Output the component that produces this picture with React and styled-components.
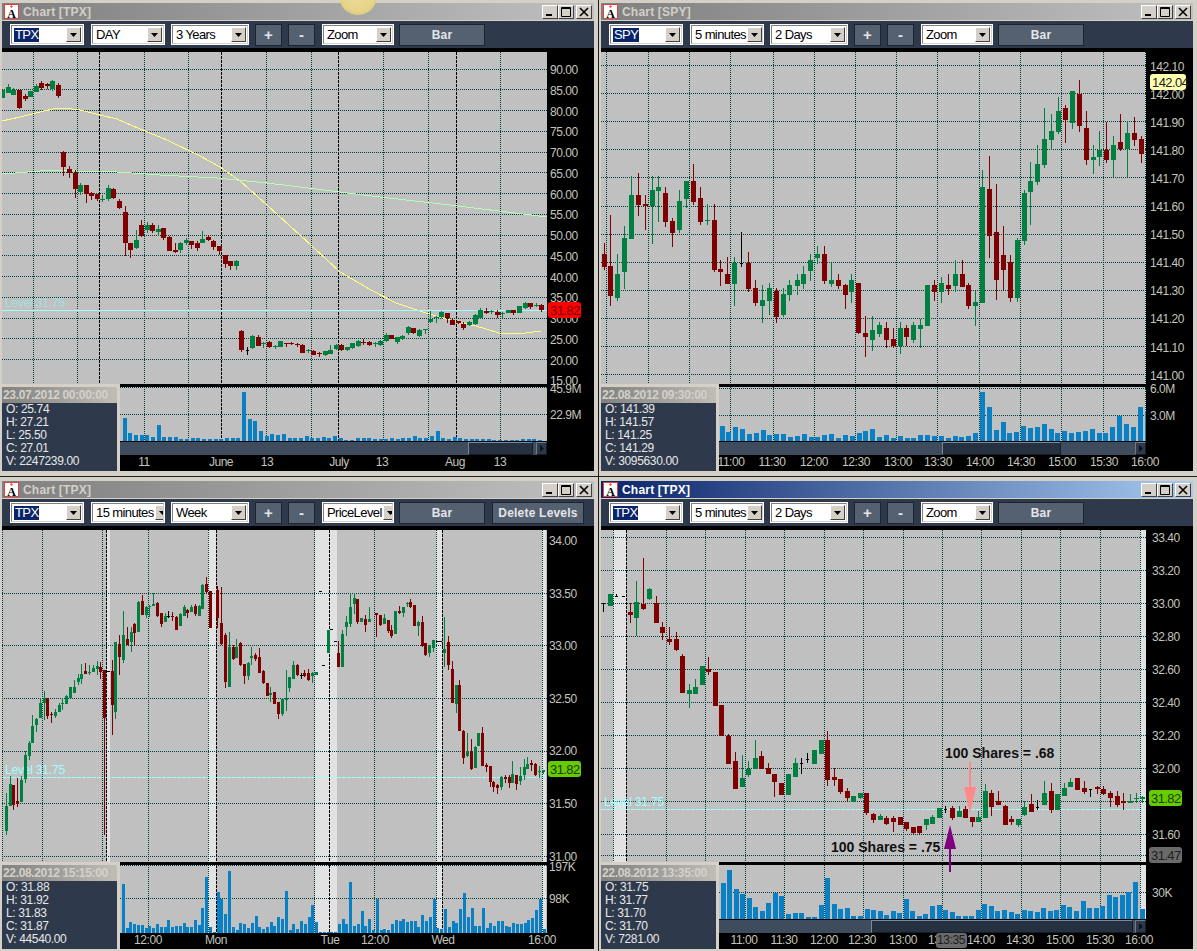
import React from "react";
import styled, { createGlobalStyle } from "styled-components";

// candle data: colour, x, wick top, body top, body bottom, wick bottom
// numbers were read off 3x crops, so every block carries its own origin
const readCandles = (text, ox, oy, fx = 3, fy = 3) =>
  text
    .trim()
    .split("\n")
    .map((line) => {
      const [c, x, wt, bt, bb, wb] = line.trim().split(" ");
      return {
        c,
        x: ox + x / fx,
        wt: oy + wt / fy,
        bt: oy + bt / fy,
        bb: oy + bb / fy,
        wb: oy + wb / fy,
      };
    });

const tpxDayA = readCandles(`g 7 120 120 143 143
g 24 102 112 128 130
g 40 115 120 135 135
r 57 120 120 174 177
r 75 132 138 148 152
g 90 122 122 140 140
g 107 102 108 126 126
r 123 93 98 114 120
r 141 100 102 108 117
g 157 90 93 117 122
r 174 100 106 138 143
r 190 304 307 351 377
r 207 348 358 370 384
r 224 360 368 417 444
g 240 400 405 426 434
r 258 405 405 432 459
r 273 425 428 438 450
r 291 432 432 447 453
g 307 435 448 450 456
g 324 406 414 447 453
r 340 414 417 444 448
r 357 447 453 474 477
r 375 468 486 579 617
r 390 579 579 600 624
g 407 540 570 594 597
r 423 510 525 558 561
g 441 516 525 540 549
r 457 519 525 543 549
g 474 525 537 546 558
r 490 534 534 565 570
r 507 558 561 603 603
r 524 579 600 606 609
g 540 576 579 600 609
g 558 564 570 579 585
r 573 573 573 585 597
r 591 573 579 594 603
g 607 543 567 579 579
r 624 555 561 570 573
r 640 570 573 591 600
r 657 588 588 603 616
r 675 616 616 642 654
r 690 633 633 648 660
g 708 630 633 648 660`, 0, 50);

const tpxDayB = readCandles(`r 15 120 123 180 186
k 32 172 180 182 195
g 49 135 138 175 178
r 65 135 141 168 168
g 82 156 159 162 174
r 98 152 156 171 174
g 116 165 168 170 177
g 132 153 153 170 170
r 149 159 159 161 171
r 165 156 158 160 165
r 182 159 161 165 171
r 199 163 165 189 189
g 216 177 181 183 189
r 232 180 183 194 195
r 249 186 189 192 201
g 266 183 183 195 197
g 282 165 180 192 192
g 299 162 165 178 180
r 315 162 165 180 183
g 332 171 171 180 183
g 349 158 160 174 177
g 365 150 153 168 171
r 382 147 156 159 165
r 399 153 155 165 168
g 416 156 159 163 171
g 432 150 153 165 168
g 449 129 135 153 156
r 465 135 135 147 147
g 482 141 141 156 162
g 499 135 138 146 150
g 516 108 111 129 135
r 532 114 114 129 132
g 549 117 120 138 141
g 566 117 117 120 132
g 582 63 87 96 100
g 599 78 80 82 99
g 615 63 66 81 84
r 632 69 69 84 99
r 649 84 90 105 105
r 666 92 94 99 102
r 682 96 102 114 120
g 699 93 96 105 108
g 716 72 75 102 105
g 732 54 60 84 87
r 749 54 63 69 72
g 766 60 63 65 72
r 783 60 66 75 84
g 799 66 69 72 84
g 815 60 60 69 69
r 832 60 60 69 75
g 849 48 48 69 69
g 866 36 39 54 57
r 882 39 39 51 57
g 899 39 45 47 51
r 915 42 45 60 66`, 236, 290);

const spyA = readCandles(`r 13 249 282 321 330
r 31 165 318 408 438
g 52 282 342 414 423
g 72 198 234 336 387
g 93 48 105 237 237
r 113 39 105 135 168
r 134 105 132 138 210
g 155 48 90 138 252
g 175 48 81 93 186
r 196 81 99 186 201
r 217 174 183 219 261
g 238 90 123 210 219
g 258 63 63 117 144
r 279 12 63 126 135
r 300 81 114 186 195
g 320 132 180 183 195
r 342 132 180 330 336
r 361 300 327 336 378
r 382 291 342 372 372
g 403 291 309 372 438
k 424 216 309 312 321
r 444 276 309 387 396
r 465 360 384 429 438
g 486 375 420 438 489
g 507 369 384 423 465
r 528 384 393 471 489
g 548 384 402 465 471
g 568 360 375 405 423
g 590 342 360 378 405
g 610 318 342 372 387
g 630 282 300 333 363
g 651 258 282 294 312
r 672 258 282 363 372
g 693 309 360 372 381
r 714 342 360 378 387
r 734 372 375 405 447
g 754 342 360 396 429
r 775 369 369 519 522
r 796 468 519 531 591
g 816 468 510 540 573
g 837 486 495 522 531
r 858 486 504 540 564
r 879 504 537 558 564
g 899 486 504 558 582
r 919 495 504 531 558
g 940 486 495 540 549
g 961 477 495 507 564
g 982 375 375 498 498
r 1002 360 375 396 423
g 1023 351 369 396 429
r 1044 342 375 387 405
g 1065 300 342 378 396
r 1085 300 342 381 381
r 1105 369 375 438 447
g 1126 393 426 438 498
g 1147 30 81 429 429
r 1167 -12 87 228 294`, 600, 160);

const spyB = readCandles(`r 48 402 546 690 750
r 70 528 615 660 720
r 90 615 636 744 756
g 111 564 570 744 756
g 131 420 430 573 585
g 151 336 393 426 525
g 172 285 342 396 405
g 193 174 267 345 354
g 214 192 243 270 300
g 235 141 183 246 252
r 255 165 174 210 279
g 275 123 123 219 237
r 297 90 132 228 246
r 318 183 234 330 345
g 338 285 321 330 372
g 358 243 300 321 348
r 379 216 300 330 339
g 400 258 285 330 381
r 421 192 276 297 303
g 441 213 249 297 381
r 462 201 249 270 288
r 483 258 267 312 339`, 980, 50);

const weekA = readCandles(`g 19 669 708 783 795
g 31 618 642 708 708
r 40 645 645 705 720
r 52 624 693 702 711
g 64 618 630 696 696
g 76 543 555 627 639
g 87 513 519 558 570
g 97 435 468 519 519
g 109 444 447 465 486
g 121 384 399 444 444
g 133 363 384 399 450
r 142 384 384 438 447
r 154 426 432 435 459
g 166 417 426 438 444
g 178 399 405 426 426
g 187 384 399 402 420
g 199 375 378 402 402
g 211 351 351 384 384
g 223 330 351 369 369
g 235 312 324 336 345
g 244 282 312 327 342
r 256 279 303 312 312
g 268 285 306 309 315
g 280 285 294 306 306
g 292 273 288 297 315
r 301 276 291 306 327
r 313 300 300 444 795
k 325 303 303 306 306
r 337 270 303 405 495
g 346 216 216 426 447
r 358 195 222 261 315
g 370 123 195 270 279
r 382 171 207 225 225
g 392 171 186 216 246
r 403 159 162 189 225
g 415 93 96 186 186
r 427 75 93 135 135
g 439 108 111 135 144
g 448 105 108 111 141
g 460 69 102 108 108
r 472 96 99 138 141
r 484 129 129 162 171
g 495 129 138 156 156
k 505 123 138 141 144
r 517 126 138 141 153
r 529 138 141 180 180
g 541 129 132 168 168
g 552 105 111 138 138
r 562 117 120 129 144
g 574 105 111 126 126
r 586 102 108 132 138
g 598 105 108 138 138
g 607 42 45 117 117
r 619 21 42 66 72
r 631 63 63 174 174
r 652 48 60 144 174
r 664 51 159 222 225
r 676 189 195 336 354
g 688 186 231 351 351
r 700 225 231 267 270
g 709 207 231 264 264
r 721 216 219 285 288
r 733 282 282 318 342
g 745 276 279 318 330
g 754 231 258 264 285
r 766 249 255 267 273
r 778 234 261 309 309
r 790 300 303 339 342
r 802 339 339 378 378
g 811 351 369 375 396
r 823 366 366 402 402
r 835 396 396 432 447`, 0, 570);

const weekB = readCandles(`g 37 385 388 432 438
g 49 300 385 390 423
g 58 321 321 354 366
g 70 273 285 327 327
r 82 282 285 315 318
k 94 309 315 318 327
r 103 300 309 318 321
r 115 297 309 330 333
g 127 306 309 318 339
g 139 306 306 315 315
k 150 64 64 66 66
k 160 286 286 288 288
g 173 180 180 249 249
k 184 177 177 179 179
k 196 213 213 215 215
r 205 213 249 291 291
g 217 180 192 291 291
g 229 138 156 171 198
g 241 69 111 162 171
g 253 69 84 102 132
r 262 87 87 156 162
g 274 144 144 156 156
r 286 135 147 165 186
g 298 111 147 156 156
r 318 129 129 135 201
r 331 135 135 165 168
g 343 132 144 162 162
r 355 150 150 183 189
r 364 165 180 198 204
g 376 123 123 192 192
r 388 108 123 129 132
g 400 111 111 129 141
g 412 96 99 102 111
r 421 87 96 111 114
r 433 105 105 168 168
g 445 153 156 168 198
r 457 138 156 228 231
r 466 219 219 255 258
g 478 225 225 249 261
g 490 210 210 234 246
k 502 213 213 215 215
k 511 213 213 215 215
g 523 141 237 249 291
r 535 198 216 285 300
r 547 273 297 399 399
g 559 345 345 402 429
r 568 330 345 483 483
r 580 480 483 564 582
g 592 489 543 558 561
r 604 507 543 597 600
g 616 528 531 594 594
g 625 489 489 528 528
r 637 471 489 588 588
r 649 579 585 592 606
r 661 588 588 636 651
r 670 633 636 651 666
r 682 642 645 654 672
g 694 618 621 651 660
r 706 615 621 627 639
r 718 615 621 639 654
g 727 573 612 639 639
r 739 615 615 642 660
g 751 591 618 633 645
g 763 567 591 615 630
g 772 561 582 597 597
r 784 570 579 585 603
r 796 579 582 615 618
g 808 588 603 606 624
g 820 600 600 606 612`, 270, 570);

const fiveA = readCandles(`k 10 159 159 161 186
g 30 132 132 168 168
k 49 132 138 140 141
k 70 138 138 140 140
r 90 159 186 195 219
g 108 93 156 204 258
r 129 24 162 177 180
g 148 114 117 147 150
r 168 138 159 219 219
r 187 216 231 249 270
r 207 231 267 276 285
r 228 246 267 300 303
r 246 312 318 429 429
g 266 402 420 432 474
g 285 387 411 432 432
g 306 348 348 405 405
r 325 321 357 366 375
r 345 366 366 468 468
r 364 465 465 558 558`, 600, 550);

const fiveB = readCandles(`r 336 43 47 132 132
r 354 97 123 207 207
g 371 105 174 201 201
g 388 123 147 165 171
g 405 60 114 147 147
r 423 93 108 147 147
r 440 129 144 162 162
r 457 162 162 186 231
r 475 190 190 225 225
g 492 162 162 225 225
g 510 114 129 171 171
k 526 114 129 131 162
k 543 99 117 119 129
g 561 90 90 132 132
g 578 60 60 102 102
r 595 33 60 180 198
r 612 144 171 180 198
r 629 177 177 216 222
r 647 204 213 234 243
g 664 228 228 246 246
g 681 219 219 234 237
r 698 219 219 279 285
r 716 279 282 300 309
g 733 282 288 300 300
r 750 288 294 312 315
r 767 288 294 306 336
r 785 291 291 315 315
r 802 306 306 327 333
r 819 321 321 339 342
r 836 318 318 339 345
g 853 297 297 315 330
g 870 285 291 312 312
g 888 264 264 294 294
k 905 258 267 269 279
r 922 258 264 294 300
g 940 258 273 291 291
r 957 258 267 294 294
r 974 291 291 306 321
g 991 273 291 306 306
g 1009 192 213 294 294
r 1025 210 219 261 288
r 1043 213 243 255 255
r 1060 255 258 315 315
r 1077 288 297 306 315
g 1095 297 297 315 321
g 1112 243 261 285 288
r 1129 222 252 276 276
k 1146 240 261 263 270
g 1163 183 219 255 255
r 1181 189 213 270 279
g 1198 222 222 270 270
g 1215 189 204 228 228
g 1232 174 186 201 201
r 1250 174 174 210 210
r 1267 183 204 216 222
k 1284 207 207 209 231
r 1302 198 201 207 222
r 1319 198 207 222 225
r 1336 213 219 234 261
r 1354 213 228 255 261
r 1371 219 243 249 270
g 1388 222 243 248 249
g 1405 219 235 237 249
g 1421 228 231 238 249`, 600, 720, 2.62, 3);

const volumes = {
  day: [144,189,195,195,195,201,165,201,201,201,207,207,204,204,207,207,208,207,204,204,204,66,147,153,183,198,192,195,192,204,204,204,198,204,204,201,204,198,204,210,210,204,204,204,207,207,207,204,207,204,204,198,204,204,198,183,204,207,201,204,207,208,208,208,208,209,210,210,210,209,208,207,208,209],
  spy: [138,156,141,147,162,159,150,165,162,162,171,168,162,171,171,165,162,174,165,168,159,153,147,171,165,174,168,174,174,165,165,168,168,174,168,171,168,159,36,81,150,126,159,156,138,144,141,132,147,159,153,159,156,153,147,159,159,141,108,132,141,81,93],
  week: [87,219,201,207,210,210,219,213,219,207,216,216,195,216,213,213,204,216,216,195,210,159,66,216,231,111,132,177,48,216,225,204,207,219,204,183,216,222,216,201,213,186,192,108,225,207,222,198,207,186,150,201,231,231,231,231,231,207,192,207,81,213,207,168,213,192,225,132,225,222,225,207,195,198,192,201,198,198,216,180,198,186,132,219,222,162,216,198,204,162,114,186,159,213,213,159,219,204,213,198,198,213,216,204,207,207,204,195,189,165,132,222],
  five: [490,450,507,522,533,561,573,549,519,528,582,579,579,590,590,555,474,553,567,563,588,588,567,569,573,584,573,580,537,573,588,582,558,555,570,576,588,588,588,570,552,558,573,570,576,582,570,573,576,564,573,570,555,561,573,543,564,564,558,525,531,525,516,486,567],
};

const yellowLine = "2,121 20,117 40,112 57,108 70,108.7 80,110 100,115 117,119 140,129 167,140 200,156 220,167 240,181 267,205 300,235 340,272 371,290 396,303 423,312 453,321 476,326 499,333 513,334 526,333 541,331";
const greenLine = "2,174 53,170 77,171 117,172 160,175 217,178 267,183 300,187 380,197 450,205 547,217";

const charts = [
  {
    id: "day",
    title: "Chart [TPX]",
    period: "DAY",
    range: "3 Years",
    mode: "Zoom",
    left: 2,
    top: 52,
    volH: 54,
    scroll: { left: 348, width: 65 },
    candles: [...tpxDayA, ...tpxDayB],
    bodyW: 5,
    teal: [33, 77, 144, 188, 266, 311, 383, 428, 500],
    black: [99, 221, 338, 456],
    rows: [...Array(15)].map((_, i) => 69 + i * 20.75),
    volRows: [387, 414],
    vol: { data: volumes.day, oy: 370, from: 124.5, to: 540, w: 4 },
    level: { y: 310, faint: true },
    info: ["23.07.2012 00:00:00", "25.74", "27.21", "25.50", "27.01", "2247239.00"],
    prices: ["90.00","85.00","80.00","75.00","70.00","65.00","60.00","55.00","50.00","45.00","40.00","35.00","30.00","25.00","20.00","15.00"],
    priceX: 550,
    priceY: (i) => 69 + i * 20.75,
    volLabels: [["45.9M", 388], ["22.9M", 414]],
    tagX: 548,
    tags: [{ label: "31.82", y: 310, bg: "#ff0000", fg: "#700000" }],
    times: [["11", 144], ["June", 221], ["13", 267], ["July", 339], ["13", 382], ["Aug", 455], ["13", 500]],
  },
  {
    id: "spy",
    title: "Chart [SPY]",
    symbol: "SPY",
    period: "5 minutes",
    range: "2 Days",
    mode: "Zoom",
    left: 601,
    top: 52,
    volH: 54,
    scroll: { left: 223, width: 119 },
    candles: [...spyA, ...spyB],
    bodyW: 5,
    bands: [[1145, 1147]],
    teal: [606, 648, 689, 730, 773, 814, 855, 896, 937, 979, 1020, 1061, 1103, 1145],
    black: [],
    rows: [...Array(12)].map((_, i) => 65.5 + i * 28.1),
    volRows: [388, 415],
    vol: { data: volumes.spy, oy: 380, from: 722, to: 1147, w: 5 },
    info: ["22.08.2012 09:30:00", "141.39", "141.57", "141.25", "141.29", "3095630.00"],
    prices: ["142.10","142.00","141.90","141.80","141.70","141.60","141.50","141.40","141.30","141.20","141.10","141.00"],
    priceX: 1150,
    priceY: (i) => 65.5 + i * 28.1,
    volLabels: [["6.0M", 388], ["3.0M", 415]],
    tagX: 1150,
    tags: [{ label: "142.04", y: 82, bg: "#ffffb0", fg: "#202020" }],
    times: [["11:00", 731], ["11:30", 772], ["12:00", 814], ["12:30", 856], ["13:00", 898], ["13:30", 938], ["14:00", 980], ["14:30", 1021], ["15:00", 1062], ["15:30", 1104], ["16:00", 1145]],
  },
  {
    id: "week",
    title: "Chart [TPX]",
    period: "15 minutes",
    range: "Week",
    mode: "PriceLevel",
    extraButton: "Delete Levels",
    lower: true,
    left: 2,
    top: 530,
    volH: 68,
    candles: [...weekA, ...weekB],
    bodyW: 3,
    bands: [[107, 110], [208, 216], [315, 337], [436, 442], [542, 546]],
    teal: [2, 42, 102, 148, 208, 314, 374, 436, 542],
    black: [106, 216, 329, 442],
    rows: [593, 645.5, 698, 751, 803, 856],
    volRows: [865, 898],
    vol: { data: volumes.week, oy: 855, from: 123.4, to: 544, w: 3 },
    level: { y: 777 },
    info: ["22.08.2012 15:15:00", "31.88", "31.92", "31.83", "31.87", "44540.00"],
    prices: ["34.00","33.50","33.00","32.50","32.00","31.50","31.00"],
    priceX: 549,
    priceY: (i) => 540 + i * 52.6,
    volLabels: [["197K", 866], ["98K", 898]],
    tagX: 548,
    tags: [{ label: "31.82", y: 769, bg: "#66cc00", fg: "#203a00" }],
    times: [["12:00", 148], ["Mon", 216], ["Tue", 330], ["12:00", 375], ["Wed", 443], ["16:00", 542]],
  },
  {
    id: "five",
    title: "Chart [TPX]",
    active: true,
    period: "5 minutes",
    range: "2 Days",
    mode: "Zoom",
    lower: true,
    left: 601,
    top: 530,
    volH: 54,
    scroll: { left: 152, width: 262 },
    candles: [...fiveA, ...fiveB],
    bodyW: 5,
    bands: [[613, 626], [1140, 1146]],
    teal: [613, 666, 705, 745, 784, 824, 863, 903, 942, 981, 1021, 1060, 1100, 1140],
    black: [626],
    rows: [537, 570, 603, 636, 669, 702, 735, 768, 801, 834, 855],
    volRows: [892],
    vol: { data: volumes.five, oy: 720, from: 723, to: 1142, w: 5 },
    level: { y: 809 },
    info: ["22.08.2012 13:35:00", "31.75", "31.77", "31.70", "31.70", "7281.00"],
    prices: ["33.40","33.20","33.00","32.80","32.60","32.40","32.20","32.00","","31.60"],
    priceX: 1152,
    priceY: (i) => 537 + i * 33,
    volLabels: [["30K", 892]],
    tagX: 1149,
    tags: [
      { label: "31.82", y: 798, bg: "#66cc00", fg: "#203a00" },
      { label: "31.47", y: 855, bg: "#6a6a6a", fg: "#202020" },
    ],
    times: [["11:00", 744], ["11:30", 784], ["12:00", 824], ["12:30", 862], ["13:00", 903], ["13:30", 942], ["14:00", 981], ["14:30", 1020], ["15:00", 1060], ["15:30", 1100], ["16:00", 1139]],
    crosshairTime: { label: "13:35", x: 951 },
    notes: true,
  },
];

const PLOT_W = 545;
const PLOT_H = 332;
const INFO_W = 118;
const CANDLE_COLORS = { r: "#7f0000", g: "#008040", k: "#000000" };

const GlobalStyle = createGlobalStyle`
  html, body { margin: 0; padding: 0; background: #1a1a1a; }
  body { font-family: "Liberation Sans", Arial, sans-serif; }
`;

const Desktop = styled.div`
  position: relative;
  width: 1197px;
  height: 951px;
  overflow: hidden;
  background: #1c1c1c;
  display: grid;
  grid-template-columns: 598px 598px;
  grid-template-rows: 476px 474px;
  gap: 1px;
`;

const Glow = styled.div`
  position: absolute;
  left: 339px;
  top: -23px;
  width: 38px;
  height: 38px;
  border-radius: 50%;
  background: radial-gradient(circle at 50% 45%, #f0dc98 0%, #e6d488 60%, #cdbb6c 100%);
`;

const Frame = styled.section`
  background: #d4d0c8;
  padding: ${(p) => (p.$lower ? "4px" : "3px")} 4px 0 2px;
  display: flex;
  flex-direction: column;
`;

const TitleBar = styled.header`
  height: 17px;
  display: flex;
  align-items: center;
  padding: 0 2px 0 2px;
  margin-bottom: 1px;
  background: ${(p) =>
    p.$active
      ? "linear-gradient(90deg, #0a246a 0%, #a6caf0 100%)"
      : "linear-gradient(90deg, #808080 0%, #c0c0c0 100%)"};
`;

const TitleText = styled.span`
  margin-left: 4px;
  flex: 1;
  font-size: 12px;
  font-weight: 700;
  letter-spacing: 0.2px;
  color: ${(p) => (p.$active ? "#ffffff" : "#d4d0c8")};
`;

const CaptionButton = styled.button`
  width: 16px;
  height: 14px;
  margin-left: ${(p) => (p.$gap ? "2px" : "0")};
  padding: 0;
  border: 1px solid;
  border-color: #ffffff #404040 #404040 #ffffff;
  background: #d4d0c8;
  display: flex;
  align-items: center;
  justify-content: center;
`;

const Toolbar = styled.div`
  height: 27px;
  background: #2e3a4c;
  display: flex;
  align-items: center;
  padding: 0 0 0 8px;
`;

const SelectBox = styled.div`
  box-sizing: border-box;
  width: ${(p) => p.$w}px;
  height: 21px;
  margin-right: ${(p) => p.$mr ?? 7}px;
  padding: 0 1px 0 2px;
  display: flex;
  align-items: center;
  justify-content: space-between;
  background: #ffffff;
  border: 2px solid;
  border-color: #808080 #d4d0c8 #d4d0c8 #808080;
  outline: 1px solid #ffffff;
  outline-offset: -1px;
  font-size: 13px;
  letter-spacing: -0.6px;
  color: #000000;
  overflow: hidden;
  white-space: nowrap;
`;

const Picked = styled.span`
  background: ${(p) => (p.$on ? "#0a246a" : "transparent")};
  color: ${(p) => (p.$on ? "#ffffff" : "#000000")};
  padding: 0 1px;
  line-height: 14px;
`;

const SelectArrow = styled.div`
  flex: none;
  width: 15px;
  height: 15px;
  box-sizing: border-box;
  border: 1px solid;
  border-color: #ffffff #404040 #404040 #ffffff;
  background: #d4d0c8;
  display: flex;
  align-items: center;
  justify-content: center;
`;

const ToolButton = styled.button`
  box-sizing: border-box;
  width: ${(p) => p.$w}px;
  height: 22px;
  margin-right: ${(p) => p.$mr ?? 7}px;
  padding: 0;
  background: #556070;
  border: 1px solid #1c2430;
  color: #e4e6ea;
  font-family: "Liberation Sans", Arial, sans-serif;
  font-size: ${(p) => (p.$plain ? "15px" : "12px")};
  font-weight: 700;
  letter-spacing: 0.2px;
`;

const Chart = styled.div`
  position: relative;
  height: 423px;
  box-sizing: border-box;
  padding-top: 4px;
  background: #000000;
  display: grid;
  grid-template-columns: ${PLOT_W}px 47px;
`;

const LeftColumn = styled.div`
  display: flex;
  flex-direction: column;
`;

const Pane = styled.svg`
  display: block;
  flex: none;
  overflow: hidden;
`;

const AxisPane = styled.svg`
  display: block;
  overflow: visible;
`;

const LowerRow = styled.div`
  display: flex;
  height: 87px;
`;

const InfoBox = styled.aside`
  position: relative;
  z-index: 2;
  box-sizing: border-box;
  flex: none;
  width: ${INFO_W}px;
  height: 87px;
  border-top: 3px solid #d4d0c8;
  border-right: 3px solid #d4d0c8;
  background: #2e3a4c;
  color: #e8e8e8;
  font-size: 12px;
  letter-spacing: -0.35px;
`;

const InfoStamp = styled.div`
  height: 16px;
  line-height: 16px;
  padding-left: 1px;
  background: linear-gradient(90deg, #808080 0%, #c0bdb6 100%);
  color: #d4d0c8;
  font-weight: 700;
  white-space: nowrap;
  overflow: hidden;
`;

const InfoRow = styled.div`
  height: 13px;
  line-height: 13px;
  padding-left: 4px;
  &:first-of-type { margin-top: 2px; }
`;

const RightColumn = styled.div`
  flex: 1;
  min-width: 0;
  display: flex;
  flex-direction: column;
`;

const Divider = styled.div`
  flex: none;
  height: 3px;
  background: #000000;
`;

const VolumeBase = styled.div`
  flex: none;
  height: 1px;
  background: #000000;
`;

const ScrollTrack = styled.div`
  flex: none;
  height: 13px;
  background: #3f4c5e;
  display: flex;
  align-items: stretch;
`;

const ScrollThumb = styled.div`
  box-sizing: border-box;
  margin-left: ${(p) => p.$left}px;
  width: ${(p) => p.$width}px;
  background: #253040;
  border: 1px solid;
  border-color: #7c8794 #141c26 #141c26 #7c8794;
`;

const ScrollEnd = styled.div`
  box-sizing: border-box;
  margin-left: auto;
  width: 11px;
  background: #2e3a4c;
  border: 1px solid;
  border-color: #6f7a88 #141c26 #141c26 #6f7a88;
  display: flex;
  align-items: center;
  justify-content: center;
`;

const TimeAxis = styled.svg`
  display: block;
  flex: none;
  overflow: visible;
`;

const GridLine = styled.line`
  stroke: ${(p) => (p.$black ? "#000000" : "#003c3c")};
  stroke-width: 1;
  stroke-dasharray: ${(p) => (p.$black ? "3 1" : "1 1")};
  shape-rendering: crispEdges;
`;

const LevelLine = styled.line`
  stroke: #a0ffff;
  stroke-dasharray: ${(p) => (p.$faint ? "none" : "4 1")};
  shape-rendering: crispEdges;
`;

const LevelText = styled.text`
  font-size: 12px;
  letter-spacing: -0.2px;
  fill: ${(p) => (p.$faint ? "#a0e0e0" : "#a0ffff")};
`;

const MovingAverage = styled.polyline`
  fill: none;
  stroke: ${(p) => p.$color};
  stroke-width: 1;
  shape-rendering: crispEdges;
`;

const AxisLabel = styled.text`
  font-size: 12px;
  letter-spacing: -0.45px;
  fill: #c4c4bc;
`;

const TagLabel = styled.text`
  font-size: 13px;
  letter-spacing: -0.6px;
`;

const NoteText = styled.text`
  font-size: 14px;
  font-weight: 700;
  fill: #101010;
`;

const Notes = styled.svg`
  position: absolute;
  left: 0;
  top: 0;
  pointer-events: none;
`;

// the little "A" program icon on the left of every caption
const AppIcon = () => (
  <svg width="15" height="15" viewBox="0 0 15 15">
    <rect x="0.5" y="0.5" width="14" height="14" fill="#fff" stroke="#e04040" />
    <path d="M7.5 1 L9 2.5 L7.5 4 L6 2.5 Z" fill="#e05050" />
    <text x="7.5" y="13.5" textAnchor="middle" fontSize="12" fontWeight="700" fontFamily="Liberation Serif">
      A
    </text>
  </svg>
);

const MinimizeIcon = () => (
  <svg width="10" height="10" viewBox="0 0 10 10">
    <rect x="1" y="7" width="6" height="2" fill="#000" />
  </svg>
);

const MaximizeIcon = () => (
  <svg width="10" height="10" viewBox="0 0 10 10">
    <path d="M0.5 0.5h9v9h-9z M0.5 1.5h9" fill="none" stroke="#000" />
  </svg>
);

const CloseIcon = () => (
  <svg width="10" height="10" viewBox="0 0 10 10">
    <path d="M1 1 L9 9 M9 1 L1 9" stroke="#000" strokeWidth="1.6" />
  </svg>
);

const DownArrow = () => (
  <svg width="7" height="4" viewBox="0 0 7 4">
    <path d="M0 0h7L3.5 4z" fill="#000" />
  </svg>
);

const RightArrow = () => (
  <svg width="4" height="7" viewBox="0 0 4 7">
    <path d="M0 0v7l4-3.5z" fill="#0c121a" />
  </svg>
);

const Select = ({ w, value, picked, mr }) => (
  <SelectBox $w={w} $mr={mr}>
    <Picked $on={picked}>{value}</Picked>
    <SelectArrow>
      <DownArrow />
    </SelectArrow>
  </SelectBox>
);

const Candle = ({ candle, bodyW }) => {
  const { c, x, wt, bt, bb, wb } = candle;
  const fill = CANDLE_COLORS[c];
  const cx = Math.round(x);
  const bw = c === "k" ? 3 : bodyW;
  return (
    <g fill={fill} shapeRendering="crispEdges">
      <rect x={cx} y={wt} width="1" height={Math.max(wb - wt, 1)} />
      <rect x={cx - Math.floor(bw / 2)} y={bt} width={bw} height={Math.max(bb - bt, 1)} />
    </g>
  );
};

const VerticalGuides = ({ chart, y1, y2 }) => (
  <>
    {(chart.bands || []).map(([a, b]) => (
      <rect key={a} x={a} y={y1} width={b - a} height={y2 - y1} fill="#e2e2e2" />
    ))}
    {chart.teal.map((x) => (
      <GridLine key={x} x1={x} x2={x} y1={y1} y2={y2} />
    ))}
    {chart.black.map((x) => (
      <GridLine key={x} $black x1={x} x2={x} y1={y1} y2={y2} />
    ))}
  </>
);

const PricePane = ({ chart }) => {
  const { left, top, level } = chart;
  return (
    <Pane width={PLOT_W} height={PLOT_H} viewBox={`${left} ${top} ${PLOT_W} ${PLOT_H}`}>
      <rect x={left} y={top} width={PLOT_W} height={PLOT_H} fill="#c0c0c0" />
      <VerticalGuides chart={chart} y1={top} y2={top + PLOT_H} />
      {chart.rows.map((y) => (
        <GridLine key={y} x1={left} x2={left + PLOT_W} y1={y} y2={y} />
      ))}
      {chart.id === "day" && (
        <>
          <MovingAverage points={yellowLine} $color="#ffff80" />
          <MovingAverage points={greenLine} $color="#b4ffb4" />
        </>
      )}
      {level && (
        <>
          <LevelLine $faint={level.faint} x1={left} x2={left + PLOT_W} y1={level.y} y2={level.y} />
          <LevelText $faint={level.faint} x={left + 3} y={level.y - 3}>
            Level 31.75
          </LevelText>
        </>
      )}
      {chart.candles.map((candle, i) => (
        <Candle key={i} candle={candle} bodyW={chart.bodyW} />
      ))}
    </Pane>
  );
};

const VolumePane = ({ chart }) => {
  const { left, top, volH, vol } = chart;
  const x0 = left + INFO_W;
  const y0 = top + PLOT_H + 3;
  const w = PLOT_W - INFO_W;
  const step = (vol.to - vol.from) / (vol.data.length - 1);
  const base = y0 + volH;
  return (
    <Pane width={w} height={volH} viewBox={`${x0} ${y0} ${w} ${volH}`}>
      <rect x={x0} y={y0} width={w} height={volH} fill="#c0c0c0" />
      <VerticalGuides chart={chart} y1={y0} y2={base} />
      {chart.volRows.map((y) => (
        <GridLine key={y} x1={x0} x2={x0 + w} y1={y} y2={y} />
      ))}
      {vol.data.map((t, i) => {
        const y = vol.oy + t / 3;
        return (
          <rect
            key={i}
            x={Math.round(vol.from + i * step - vol.w / 2)}
            y={y}
            width={vol.w}
            height={base - y}
            fill="#0a80c4"
            shapeRendering="crispEdges"
          />
        );
      })}
    </Pane>
  );
};

const PriceTag = ({ tag, x }) => (
  <g>
    <rect x={x} y={tag.y - 8} width={tag.label.length > 5 ? 36 : 33} height={16} rx="3" fill={tag.bg} />
    <TagLabel x={x + 2} y={tag.y + 5} fill={tag.fg}>
      {tag.label}
    </TagLabel>
  </g>
);

const PriceAxis = ({ chart }) => {
  const x0 = chart.left + PLOT_W;
  const h = 423 - 4;
  return (
    <AxisPane width="47" height={h} viewBox={`${x0} ${chart.top} 47 ${h}`}>
      {chart.prices.map((p, i) =>
        p ? (
          <AxisLabel key={i} x={chart.priceX} y={chart.priceY(i) + 5}>
            {p}
          </AxisLabel>
        ) : null
      )}
      {chart.volLabels.map(([text, y]) => (
        <AxisLabel key={text} x={chart.priceX} y={y + 5}>
          {text}
        </AxisLabel>
      ))}
      {chart.tags.map((tag) => (
        <PriceTag key={tag.label} tag={tag} x={chart.tagX} />
      ))}
    </AxisPane>
  );
};

const TimeLabels = ({ chart }) => {
  const x0 = chart.left + INFO_W;
  const w = PLOT_W - INFO_W;
  return (
    <TimeAxis width={w} height="16" viewBox={`${x0} 0 ${w} 16`}>
      {chart.times.map(([text, x], i) => (
        <AxisLabel key={i} x={x} y="11" textAnchor="middle">
          {text}
        </AxisLabel>
      ))}
      {chart.crosshairTime && (
        <g>
          <rect x={chart.crosshairTime.x - 15} y="0" width="31" height="15" rx="3" fill="#6a6a6a" />
          <AxisLabel x={chart.crosshairTime.x} y="11" textAnchor="middle" style={{ fill: "#1c1c1c" }}>
            {chart.crosshairTime.label}
          </AxisLabel>
        </g>
      )}
    </TimeAxis>
  );
};

// the two hand drawn trade marks on the active chart, they cross the pane edge
const TradeNotes = ({ chart }) => {
  const w = 592;
  const h = 419;
  return (
    <Notes width={w} height={h + 4} viewBox={`${chart.left} ${chart.top - 4} ${w} ${h + 4}`}>
      <NoteText x="945" y="758">100 Shares = .68</NoteText>
      <NoteText x="831" y="852">100 Shares = .75</NoteText>
      <path d="M969 762h2v25h5l-6 26-6-26h5z" fill="#ff8888" />
      <path d="M949 872h2v-23h5l-6-24-6 24h5z" fill="#800080" />
    </Notes>
  );
};

const ChartWindow = ({ chart }) => (
  <Frame $lower={chart.lower}>
    <TitleBar $active={chart.active}>
      <AppIcon />
      <TitleText $active={chart.active}>{chart.title}</TitleText>
      <CaptionButton><MinimizeIcon /></CaptionButton>
      <CaptionButton><MaximizeIcon /></CaptionButton>
      <CaptionButton $gap><CloseIcon /></CaptionButton>
    </TitleBar>
    <Toolbar>
      <Select w={74} value={chart.symbol || "TPX"} picked />
      <Select w={74} value={chart.period} mr={6} />
      <Select w={78} value={chart.range} mr={6} />
      <ToolButton $w={27} $mr={6} $plain>+</ToolButton>
      <ToolButton $w={27} $plain>-</ToolButton>
      <Select w={72} value={chart.mode} mr={5} />
      <ToolButton $w={86}>Bar</ToolButton>
      {chart.extraButton && <ToolButton $w={92} $mr={0}>{chart.extraButton}</ToolButton>}
    </Toolbar>
    <Chart>
      <LeftColumn>
        <PricePane chart={chart} />
        <LowerRow>
          <InfoBox>
            <InfoStamp>{chart.info[0]}</InfoStamp>
            <InfoRow>O: {chart.info[1]}</InfoRow>
            <InfoRow>H: {chart.info[2]}</InfoRow>
            <InfoRow>L: {chart.info[3]}</InfoRow>
            <InfoRow>C: {chart.info[4]}</InfoRow>
            <InfoRow>V: {chart.info[5]}</InfoRow>
          </InfoBox>
          <RightColumn>
            <Divider />
            <VolumePane chart={chart} />
            {chart.scroll && (
              <>
                <VolumeBase />
                <ScrollTrack>
                  <ScrollThumb $left={chart.scroll.left} $width={chart.scroll.width} />
                  <ScrollEnd><RightArrow /></ScrollEnd>
                </ScrollTrack>
              </>
            )}
            <TimeLabels chart={chart} />
          </RightColumn>
        </LowerRow>
      </LeftColumn>
      <PriceAxis chart={chart} />
      {chart.notes && <TradeNotes chart={chart} />}
    </Chart>
  </Frame>
);

export default function App() {
  return (
    <>
      <GlobalStyle />
      <Desktop>
        {charts.map((chart) => (
          <ChartWindow key={chart.id} chart={chart} />
        ))}
        <Glow />
      </Desktop>
    </>
  );
}
